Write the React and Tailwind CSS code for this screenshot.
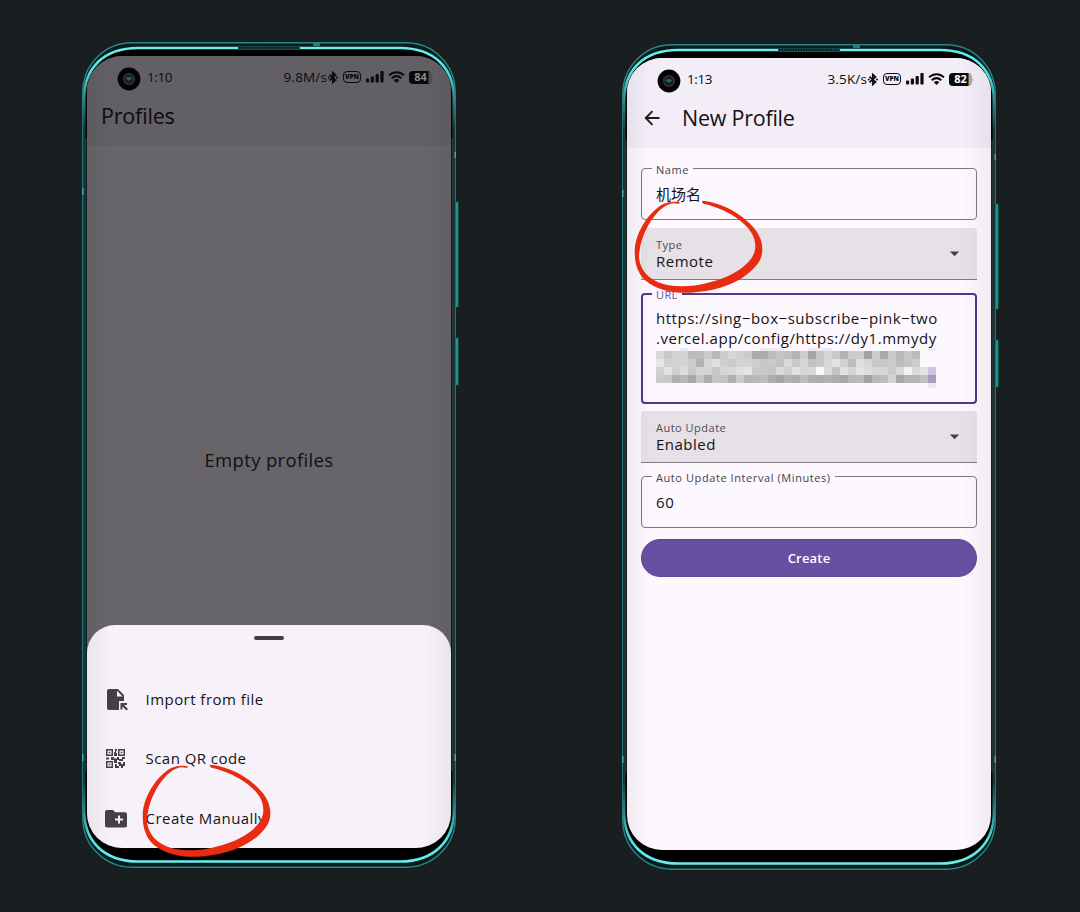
const MOSAIC = [
  "d9 c8 d2 d4 bb bc cb b9 cb d6 d0 cb aa ab bd c5 bf b4 cc a5 c8 d4 c8 b3 cc cc a2 cc a9 c8 b8 c8 bb fa fa",
  "e6 d0 d4 d5 cc b3 d6 df cf c9 d5 d2 ce c8 cb c3 d8 ca d6 c3 c8 d8 e2 d0 bd df d6 c9 c9 cc bd c3 cc fa fa",
  "d2 e3 cf dc c8 d4 d2 c8 d6 d8 e0 e4 c9 c9 c5 da d0 e1 d5 d8 f9 db c2 e0 d3 e3 dc d6 d5 ca da f3 da e3 cf",
  "cc c8 b0 b7 a8 c5 ac c4 c3 b0 cc b5 b9 bd ae a5 b1 ac bc b0 ad b1 ac a8 b8 bb a1 b9 bd d4 a8 b4 b5 c1 ac",
].map((row) => row.split(" "));

function Frame() {
  return (
    <svg className="absolute inset-0" width="380" height="828" viewBox="0 0 380 828" fill="none">
      <defs>
        <linearGradient id="edge" x1="0" y1="0" x2="0" y2="1">
          <stop offset="0" stopColor="#68efee" />
          <stop offset="0.03" stopColor="#55dcdc" />
          <stop offset="0.06" stopColor="#2d8a8c" />
          <stop offset="0.1" stopColor="#14383a" />
          <stop offset="0.9" stopColor="#14383a" />
          <stop offset="0.94" stopColor="#2d8a8c" />
          <stop offset="0.97" stopColor="#55dcdc" />
          <stop offset="1" stopColor="#68efee" />
        </linearGradient>
      </defs>
      <rect x="0.8" y="0.8" width="372.4" height="824.4" rx="49" fill="#061b1d" stroke="#2b8586" strokeWidth="1.4" />
      <path d="M2.200 105V56C2.200 26 22 6 56 6H318C352 6 371.800 26 371.800 56V769C371.800 799 352 819.500 318 819.500H56C22 819.500 2.200 799 2.200 769Z" fill="#000" stroke="url(#edge)" strokeWidth="2.600" />
      <path d="M3.900 96V729M370.100 96V729" stroke="#3c4143" strokeWidth="1" />
      <path d="M156 4.500h62v3.500h-62z" fill="#174c4e" />
      <path d="M157 5.800h60" stroke="#061517" strokeWidth="2" strokeDasharray="1.500 1.200" />
      <path d="M231 1h7v3h-7z" fill="#277d7e" />
      <path d="M372.500 110h1.500v6h-1.500zM0 146h1.500v7H0zM0 712h1.500v7H0zM372.500 712h1.500v7h-1.500z" fill="#38adae" />
      <path d="M373.700 160h2.500v105h-2.500zM373.700 296h2.500v47h-2.500z" fill="#239c9b" stroke="#145c5e" strokeWidth="0.600" />
    </svg>
  );
}

function StatusBar({ time, speed, battery, dim }) {
  return (
    <div className="flex h-[42px] shrink-0 items-center pl-[30px] text-[#0c0c0e]">
      <svg className="mt-[3px] shrink-0" width="24" height="24" viewBox="0 0 24 24">
        <circle cx="12" cy="12" r="11.400" fill="#030303" />
        <circle cx="12" cy="12" r="6.200" fill="#2b2b2d" />
        <circle cx="12" cy="12" r="3.800" fill="#15191b" />
        <path d="M8.600 11.200c2-1.600 4.800-1.600 6.800 0L12 14z" fill="#21656b" />
      </svg>
      <span className="-mt-px ml-[6px] w-[50px] shrink-0 text-[13.5px] leading-4 font-medium tracking-[-0.4px]">{time}</span>
      <div className="ml-auto flex items-center pr-[19px]">
        <span className="text-[13.5px] leading-4 tracking-[0.15px] whitespace-nowrap">{speed}</span>
        <svg width="12" height="13" viewBox="0 0 12 13" fill="none" stroke="#0b0b0c" strokeWidth="1.700">
          <path d="M2.500 3.600l6 5.500-2.700 2.400V1.500l2.700 2.400-6 5.500" />
          <circle cx="1.800" cy="6.500" r="1" fill="#0b0b0c" stroke="none" />
          <circle cx="10" cy="6.500" r="1" fill="#0b0b0c" stroke="none" />
        </svg>
        <span className="ml-1 flex h-[12px] w-[18px] items-center justify-center rounded-[4px] border-[1.5px] border-[#0b0b0c] text-[6.5px] leading-none font-extrabold">VPN</span>
        <svg className="ml-[5px]" width="18" height="12" viewBox="0 0 18 12" fill="#0b0b0c">
          <rect x="0" y="7.500" width="3.200" height="4" rx="1" />
          <rect x="4.800" y="5.500" width="3.200" height="6" rx="1" />
          <rect x="9.600" y="3" width="3.200" height="8.500" rx="1" />
          <rect x="14.400" y="0" width="3.200" height="11.500" rx="1" />
        </svg>
        <svg className="ml-1" width="17" height="12" viewBox="0 0 17 12" fill="none" stroke="#0b0b0c" strokeWidth="2">
          <path d="M1 4.300c4.500-4.100 10.500-4.100 15 0M3.700 7.200c3-2.600 6.600-2.600 9.600 0" />
          <path d="M5.700 9.200c1.700-1.500 3.900-1.500 5.600 0L8.500 12z" fill="#0b0b0c" stroke="none" />
        </svg>
        <span className="relative ml-1 flex h-[13px] w-[23px] items-center justify-center">
          <svg className="absolute inset-0" width="25" height="13" viewBox="0 0 25 13">
            <rect width="23" height="13" rx="4" fill={dim ? "#504e53" : "#aaa7ad"} />
            <path d="M4 0h15.500v13H4a4 4 0 0 1-4-4V4a4 4 0 0 1 4-4z" fill="#080809" />
            <path d="M23.500 4.500q1.500 2 0 4z" fill={dim ? "#504e53" : "#aaa7ad"} />
          </svg>
          <b className={dim ? "relative -mt-px text-[11px] leading-none font-bold text-[#8a878d]" : "relative -mt-px text-[11px] leading-none font-bold text-white"}>{battery}</b>
        </span>
      </div>
    </div>
  );
}

function MarkerRing({ className }) {
  return (
    <svg className={className} width="130" height="94" viewBox="12 151 390 282">
      <path fill="#e82c12" d="M151 159C138 154 117 155 102 162C68 177 14 240 14 308C14 350 29 378 48 394C83 423 141 434 196 428C270 422 331 396 366 361C390 339 398 319 397 297C397 262 374 230 333 199C302 175 249 154 218 153C215 156 216 160 221 162C263 172 302 190 328 211C359 235 377 260 376 292C375 318 356 342 322 364C283 390 208 411 151 410C104 409 59 395 38 359C28 341 25 323 29 302C34 263 54 220 83 188C97 174 114 162 130 161C137 161 144 164 151 161Z" />
    </svg>
  );
}

function SheetRow({ icon, children }) {
  return (
    <div className="flex h-[59.6px] items-center">
      <div className="flex w-[58.5px] pl-[18px]">{icon}</div>
      <span className="-mt-[2px] text-[15px] leading-5 font-medium tracking-[0.46px] text-[#131216]">{children}</span>
    </div>
  );
}

function FileIcon() {
  return (
    <svg width="24" height="24" viewBox="0 0 24 24" fill="#434147">
      <path fillRule="evenodd" d="M4 1h9l6 6v6h-5v9H4a2 2 0 0 1-2-2V3a2 2 0 0 1 2-2zm8 1.800V8.500h5.500z" />
      <path d="M15.500 15H22v2h-3l4 4-1.600 1.500-4-4v3h-2z" />
    </svg>
  );
}

function QrIcon() {
  return (
    <svg width="22" height="22" viewBox="0 0 22 22" fill="#434147">
      <path fillRule="evenodd" d="M1 1h7v7H1zM2.500 2.500v4h4v-4zM13 1h7v7h-7zM14.500 2.500v4h4v-4zM1 13h7v7H1zM2.500 14.500v4h4v-4z" />
      <path d="M3.700 3.700h1.600v1.600H3.700zM15.700 3.700h1.600v1.600h-1.600zM3.700 15.700h1.600v1.600H3.700zM10 1h2v2h-1v2h1v3H9V4h1zM1 9.500h3v2H1zM6 9h3v1.500h3V9h2v2h3V9h3v2h-2v2h-4v-1h-2v3H9v-3H6zM10 16h2v2h2v2h-4zM13 14h3v2h2v-2h2v4h-2v2h-2v-2h-2v-2h-1z" />
    </svg>
  );
}

function FolderIcon() {
  return (
    <svg width="22" height="18" viewBox="0 0 22 18" fill="#434147">
      <path fillRule="evenodd" d="M2 0h6l2.200 2.200H20a2 2 0 0 1 2 2V15.500a2 2 0 0 1-2 2H2a2 2 0 0 1-2-2V2a2 2 0 0 1 2-2zM13 5.500v3h-3v2h3v3h2v-3h3v-2h-3v-3z" />
    </svg>
  );
}

function Outlined({ label, className, children }) {
  return (
    <div className={`relative shrink-0 rounded-[4px] border border-[#7d7982] px-[14px] ${className}`}>
      <span className="absolute top-[-7px] left-[10px] bg-[#fdf8fe] px-1 text-[11px] leading-4 tracking-[0.58px] whitespace-nowrap text-[#45424a]">{label}</span>
      {children}
    </div>
  );
}

function Picker({ label, value, className }) {
  return (
    <div className={`flex h-[52px] shrink-0 items-center justify-between rounded-t-[4px] border-b border-[#807c84] bg-[#e5e1e7] pr-[17px] pl-[15px] ${className}`}>
      <div className="-mt-[2px]">
        <div className="text-[11px] leading-4 tracking-[0.5px] text-[#4f4c54]">{label}</div>
        <div className="text-[15px] leading-4 tracking-[0.5px] text-[#131216]">{value}</div>
      </div>
      <svg width="11" height="6" viewBox="0 0 11 6" fill="#454149"><path d="M.8.400h9.400L5.500 5.200z" /></svg>
    </div>
  );
}

function EdgeShade() {
  return <div className="pointer-events-none absolute inset-0 bg-[linear-gradient(90deg,rgba(0,0,0,.05),transparent_7%,transparent_92%,rgba(0,0,0,.05))]" />;
}

function ProfilesPhone() {
  return (
    <section className="relative mt-[42px] h-[828px] w-[380px] pt-[14px] pl-[5px]">
      <Frame />
      <div className="relative flex h-[792px] w-[364px] flex-col overflow-hidden rounded-[35px] bg-[#676569]">
        <div className="h-[90px] shrink-0 bg-[#625f65]">
          <StatusBar time="1:10" speed="9.8M/s" battery="84" dim />
          <h1 className="pt-[4px] pl-[14px] text-[21.5px] leading-7 tracking-[-0.18px] text-[#0c0b0d]">Profiles</h1>
        </div>
        <p className="h-[479px] shrink-0 pt-[300px] text-center text-[18.5px] leading-7 tracking-[0.35px] text-[#121113]">Empty profiles</p>
        <div className="flex grow flex-col rounded-t-[28px] bg-[#f7f2fa]">
          <div className="mt-[11px] ml-[167px] h-1 w-[30px] rounded-full bg-[#403e44]" />
          <div className="mt-[30px]">
            <SheetRow icon={<FileIcon />}>Import from file</SheetRow>
            <SheetRow icon={<QrIcon />}>Scan QR code</SheetRow>
            <SheetRow icon={<FolderIcon />}>Create Manually</SheetRow>
          </div>
        </div>
        <EdgeShade />
      </div>
      <MarkerRing className="absolute top-[722px] left-[60px]" />
    </section>
  );
}

function NewProfilePhone() {
  return (
    <section className="relative mt-[44px] h-[828px] w-[380px] pt-[14px] pl-[5px]">
      <Frame />
      <div className="relative flex h-[792px] w-[364px] flex-col overflow-hidden rounded-[35px] bg-[#fdf8fe]">
        <div className="h-[90px] shrink-0 bg-[#f2edf7]">
          <StatusBar time="1:13" speed="3.5K/s" battery="82" />
          <div className="flex items-center pt-[4px] pl-[17px]">
            <svg width="17" height="16" viewBox="0 0 17 16" fill="none" stroke="#1c1b1f" strokeWidth="1.900"><path d="M15.500 8H2M8.500 1.200L1.700 8l6.800 6.800" /></svg>
            <h1 className="ml-[21px] text-[21.5px] leading-7 tracking-[-0.25px] text-[#131216]">New Profile</h1>
          </div>
        </div>
        <div className="flex flex-col px-[14px] pt-[20px]">
          <Outlined label="Name" className="h-[52px] pt-[15px]">
            <span className="block font-['Noto_Sans_CJK_SC',sans-serif] text-[15px] leading-5 text-[#131216]">机场名</span>
          </Outlined>
          <Picker label="Type" value="Remote" className="mt-[8px]" />
          <div className="relative mt-[13px] h-[111px] shrink-0 rounded-[4px] border-2 border-[#51378f] px-[13px] pt-[14px]">
            <span className="absolute top-[-8px] left-[9px] bg-[#fdf8fe] px-1 text-[11px] leading-4 tracking-[0.4px] text-[#63499d]">URL</span>
            <div className="text-[15px] leading-[20px] tracking-[0.53px] whitespace-nowrap text-[#131216]">
              <div className="-mt-px">https://sing−box−subscribe−pink−two</div>
              <div>.vercel.app/config/https://dy1.mmydy</div>
            </div>
            <svg width="281" height="40" viewBox="0 0 281 40" shapeRendering="crispEdges">
              {MOSAIC.map((row, y) => row.map((tone, x) => (
                <rect key={`${x}-${y}`} x={x * 8} y={y * 8 + 3} width="8" height="8" fill={x === 34 && y > 1 ? (y === 2 ? "#cfc4df" : "#a99bc2") : tone === "fa" ? "#fdf8fe" : `#${tone}${tone}${tone}`} />
              )))}
              <path d="M24 0h8v3h-8zM104 0h24v3h-24zM152 0h24v3h-24zM272 0h8v3h-8zM272 35h8v5h-8z" fill="#eee9f1" />
            </svg>
          </div>
          <Picker label="Auto Update" value="Enabled" className="mt-[7px]" />
          <Outlined label="Auto Update Interval (Minutes)" className="mt-[13px] h-[52px] pt-[15px]">
            <span className="block text-[15px] leading-5 tracking-[0.6px] text-[#131216]">60</span>
          </Outlined>
          <button className="mt-[11px] h-[38px] shrink-0 rounded-full border border-[#5c4498] bg-[#674fa3] pt-px text-[13px] font-semibold tracking-[0.2px] text-white">Create</button>
        </div>
        <EdgeShade />
      </div>
      <MarkerRing className="absolute top-[156px] left-[12px]" />
    </section>
  );
}

export default function App() {
  return (
    <main className="flex h-[912px] w-[1080px] gap-[160px] overflow-hidden bg-[#191e21] pl-[82px] font-['Open_Sans',sans-serif]">
      <ProfilesPhone />
      <NewProfilePhone />
    </main>
  );
}
